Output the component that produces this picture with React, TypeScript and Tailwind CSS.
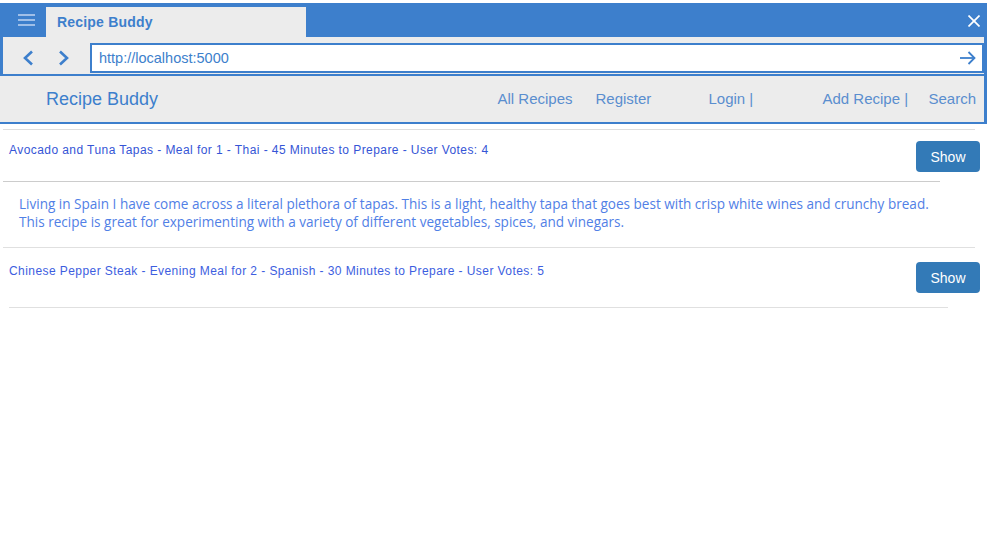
import React from "react";

const BLUE = "#3d7fcc";

export default function App() {
  return (
    <div
      className="w-[994px] h-[553px] bg-white overflow-hidden"
      style={{ fontFamily: '"Liberation Sans", Arial, sans-serif' }}
    >
      {/* browser frame */}
      <div className="mt-[3px] w-[987px] bg-[#3d7fcc] px-[3px] pb-[2px]">
        {/* title bar */}
        <div className="flex h-[34px] items-start">
          <div className="w-[43px] h-[34px] flex items-center justify-center">
            <svg width="18" height="12" viewBox="0 0 18 12" className="ml-[4px]">
              <g stroke="#b9d0ef" strokeWidth="1.6">
                <line x1="0" y1="1" x2="17" y2="1" />
                <line x1="0" y1="6" x2="17" y2="6" />
                <line x1="0" y1="11" x2="17" y2="11" />
              </g>
            </svg>
          </div>
          <div className="mt-[4px] h-[30px] w-[260px] bg-[#ececec] flex items-center pl-[11px]">
            <span className="text-[14px] font-bold text-[#3d7fcc] tracking-[0.2px]">Recipe Buddy</span>
          </div>
          <div className="ml-auto mr-[4px] mt-[12px]">
            <svg width="12" height="12" viewBox="0 0 12 12">
              <g stroke="#ffffff" strokeWidth="1.7">
                <line x1="0.5" y1="0.5" x2="11.5" y2="11.5" />
                <line x1="11.5" y1="0.5" x2="0.5" y2="11.5" />
              </g>
            </svg>
          </div>
        </div>
        {/* address row */}
        <div className="bg-[#ececec] flex pt-[6px] pb-[1px]">
          <div className="w-[87px] flex items-center">
            <svg width="12" height="16" viewBox="0 0 12 16" className="ml-[19px]">
              <polyline points="10,1.5 3,8 10,14.5" fill="none" stroke={BLUE} strokeWidth="2.6" />
            </svg>
            <svg width="12" height="16" viewBox="0 0 12 16" className="ml-[24px]">
              <polyline points="2,1.5 9,8 2,14.5" fill="none" stroke={BLUE} strokeWidth="2.6" />
            </svg>
          </div>
          <div className="flex-1 h-[30px] border-2 border-[#3d7fcc] bg-white flex items-center pl-[7px] pr-[6px]">
            <span className="text-[14.5px] text-[#3d7fcc] pt-[2px]">http://localhost:5000</span>
            <svg width="16" height="14" viewBox="0 0 16 14" className="ml-auto">
              <g fill="none" stroke={BLUE} strokeWidth="1.8">
                <line x1="0" y1="7" x2="14.5" y2="7" />
                <polyline points="8.5,1 14.5,7 8.5,13" />
              </g>
            </svg>
          </div>
        </div>
      </div>

      {/* page navbar */}
      <div className="w-[987px] h-[48px] bg-[#ececec] border-b-2 border-r-[3px] border-[#3d7fcc] flex items-center">
        <span className="ml-[46px] text-[18px] text-[#3d7fcc]">Recipe Buddy</span>
        <div className="ml-auto flex text-[15px] text-[#5a8ecf]">
          <span className="w-[98px]">All Recipes</span>
          <span className="w-[113px]">Register</span>
          <span className="w-[114px]">Login |</span>
          <span className="w-[106px]">Add Recipe |</span>
          <span className="mr-[8px]">Search</span>
        </div>
      </div>

      {/* list */}
      <div className="mt-[5px] ml-[3px] w-[972px] h-px bg-[#dedede]" />
      <div className="flex h-[51px]">
        <div className="pl-[9px] pt-[12px] text-[12px] leading-[16px] text-[#3555d6] tracking-[0.43px]">
          Avocado and Tuna Tapas - Meal for 1 - Thai - 45 Minutes to Prepare - User Votes: 4
        </div>
        <button className="ml-auto mr-[14px] mt-[11px] w-[64px] h-[31px] rounded-[4px] bg-[#337ab7] text-white text-[14px] pt-[1px] shrink-0">
          Show
        </button>
      </div>
      <div className="ml-[3px] w-[937px] h-px bg-[#cccccc]" />
      <div
        className="h-[65px] pl-[19px] pt-[13px] text-[13.55px] leading-[18px] text-[#5180e6]"
        style={{ fontFamily: '"Open Sans", "Noto Sans", sans-serif' }}
      >
        <div>
          Living in Spain I have come across a literal plethora of tapas. This is a light, healthy tapa that goes best with crisp white wines and crunchy bread.
        </div>
        <div>This recipe is great for experimenting with a variety of different vegetables, spices, and vinegars.</div>
      </div>
      <div className="ml-[3px] w-[972px] h-px bg-[#e0e0e0]" />
      <div className="flex h-[59px]">
        <div className="pl-[9px] pt-[15px] text-[12px] leading-[16px] text-[#3d5ee0] tracking-[0.43px]">
          Chinese Pepper Steak - Evening Meal for 2 - Spanish - 30 Minutes to Prepare - User Votes: 5
        </div>
        <button className="ml-auto mr-[14px] mt-[14px] w-[64px] h-[31px] rounded-[4px] bg-[#337ab7] text-white text-[14px] pt-[1px] shrink-0">
          Show
        </button>
      </div>
      <div className="ml-[9px] w-[939px] h-px bg-[#e0e0e0]" />
    </div>
  );
}
